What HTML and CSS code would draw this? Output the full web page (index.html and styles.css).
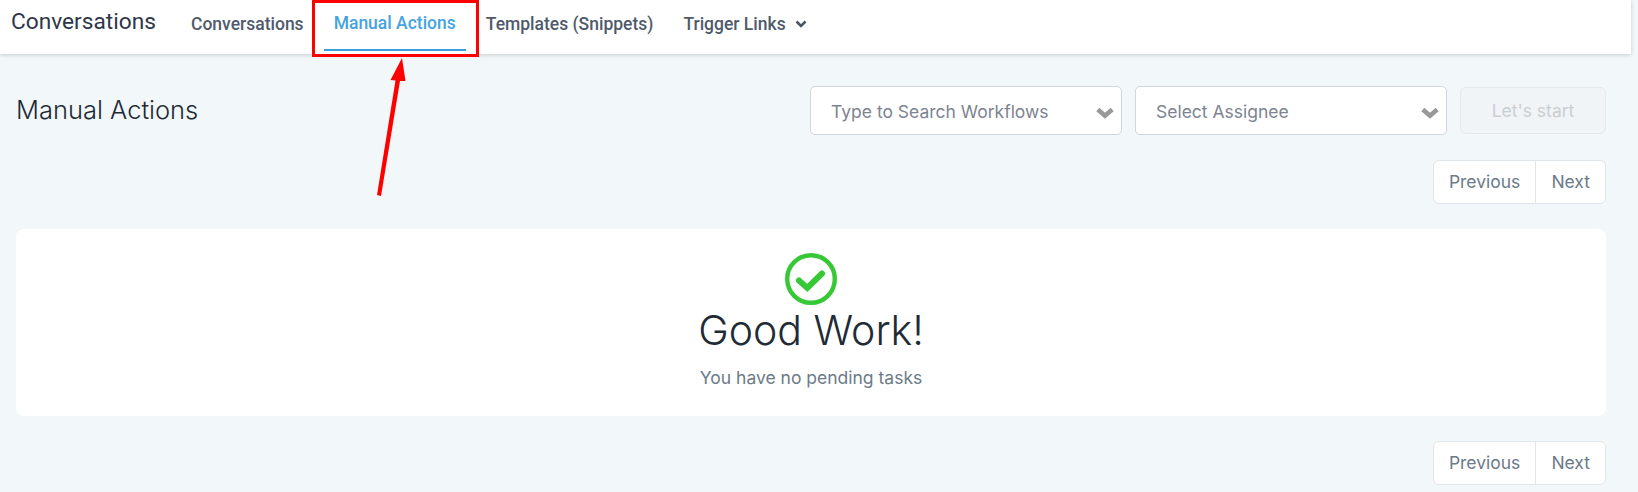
FILE: index.html
```html
<!DOCTYPE html>
<html lang="en">
<head>
<meta charset="utf-8">
<title>Manual Actions</title>
<link rel="stylesheet" href="styles.css">
</head>
<body>
<header class="topbar">
  <div class="brand">Conversations</div>
  <nav class="tabs">
    <a class="tab">Conversations</a>
    <a class="tab active">Manual Actions</a>
    <a class="tab">Templates (Snippets)</a>
    <a class="tab">Trigger Links
      <svg class="tab-caret" viewBox="0 0 12 8" width="12" height="8"><path d="M1.500 1.500 6 6l4.500-4.500" fill="none" stroke="#4b5563" stroke-width="2.600"/></svg>
    </a>
  </nav>
</header>
<main class="content">
  <div class="toolbar">
    <h1 class="page-title">Manual Actions</h1>
    <div class="filters">
      <div class="select"><span>Type to Search Workflows</span>
        <svg class="select-caret" viewBox="0 0 18 12" width="18" height="12"><path d="M1.800 2.400 9 8.700l7.200-6.300" fill="none" stroke="#999" stroke-width="4.600"/></svg>
      </div>
      <div class="select"><span>Select Assignee</span>
        <svg class="select-caret" viewBox="0 0 18 12" width="18" height="12"><path d="M1.800 2.400 9 8.700l7.200-6.300" fill="none" stroke="#999" stroke-width="4.600"/></svg>
      </div>
      <button class="start" disabled>Let's start</button>
    </div>
  </div>
  <div class="pager-row">
    <div class="pager"><span class="page-btn">Previous</span><span class="page-btn">Next</span></div>
  </div>
  <section class="card">
    <svg class="check" viewBox="0 0 52 52" width="52" height="52">
      <circle cx="26" cy="26" r="23.800" fill="none" stroke="#37c837" stroke-width="4.400"/>
      <path d="M14 27.500 22.300 35 37 20.500" fill="none" stroke="#37c837" stroke-width="6" stroke-linecap="round"/>
    </svg>
    <h2 class="card-title">Good Work!</h2>
    <p class="card-text">You have no pending tasks</p>
  </section>
  <div class="pager-row bottom">
    <div class="pager"><span class="page-btn">Previous</span><span class="page-btn">Next</span></div>
  </div>
</main>
<div class="mark-box"></div>
<svg class="mark-arrow" viewBox="0 0 40 140" width="40" height="140">
  <path d="M35 1 23.500 23l5 .5L10 138l4 1L33 24l5.500 0z" fill="#ff0000"/>
</svg>
</body>
</html>
```
FILE: styles.css
```css
* { box-sizing: border-box; }
html, body { height: 100%; }
body {
  margin: 0;
  width: 1638px;
  height: 492px;
  overflow: hidden;
  position: relative;
  background: #f2f7fa;
  font-family: Inter, "Liberation Sans", sans-serif;
}
.topbar {
  width: 1631px;
  height: 54px;
  background: #fff;
  box-shadow: 0 1px 4px rgba(0, 0, 0, .18);
  display: flex;
  padding-left: 11px;
  font-family: Roboto, "Liberation Sans", sans-serif;
}
.brand {
  width: 170px;
  font-size: 22.700px;
  font-weight: 400;
  line-height: 26px;
  padding-top: 9px;
  color: #2d3748;
}
.tabs { display: flex; }
.tab {
  height: 51px;
  padding: 12px 10px 0;
  margin-right: 10px;
  font-size: 17.500px;
  font-weight: 500;
  line-height: 24px;
  color: #4f5a6b;
  display: flex;
  align-items: flex-start;
}
.tab.active {
  color: #45a3de;
  border-bottom: 2px solid #3b9fdc;
  padding-top: 11px;
}
.tab-caret { margin: 8px 0 0 9px; }
.content { width: 1606px; padding-left: 16px; }
.toolbar {
  display: flex;
  justify-content: space-between;
  align-items: flex-start;
  padding-top: 32px;
}
.page-title {
  margin: 0;
  font-size: 25.500px;
  font-weight: 300;
  line-height: 30px;
  padding-top: 9px;
  color: #212b36;
}
.filters { display: flex; gap: 13px; align-items: flex-start; }
.select {
  width: 312px;
  height: 49px;
  background: #fff;
  border: 1px solid #cfd6e0;
  border-radius: 5px;
  display: flex;
  justify-content: space-between;
  align-items: center;
  padding: 1px 7px 0 20px;
  font-size: 17.500px;
  color: #7d8491;
}
.select-caret { margin-top: 3px; }
.start {
  width: 146px;
  height: 47px;
  margin-top: 1px;
  background: #f1f4f6;
  border: 1px solid #e5e9ee;
  border-radius: 6px;
  font: 17.500px Inter, "Liberation Sans", sans-serif;
  color: #c9ced3;
  padding: 0;
}
.pager-row { display: flex; justify-content: flex-end; margin-top: 25px; }
.pager {
  display: flex;
  height: 44px;
  background: #fff;
  border: 1px solid #e1e6ec;
  border-radius: 6px;
}
.page-btn {
  font-size: 17.500px;
  line-height: 42px;
  padding: 0 15px;
  color: #6c7a89;
}
.page-btn + .page-btn { border-left: 1px solid #e1e6ec; }
.card {
  margin-top: 25px;
  height: 187px;
  background: #fff;
  border-radius: 8px;
  display: flex;
  flex-direction: column;
  align-items: center;
  padding-top: 24px;
}
.card-title {
  margin: 0;
  font-size: 41px;
  font-weight: 300;
  line-height: 50px;
  color: #212b36;
}
.card-text {
  margin: 11px 0 0;
  font-size: 17.500px;
  line-height: 24px;
  color: #6c7a89;
}
.pager-row.bottom { margin-top: 25px; }
.mark-box {
  position: absolute;
  left: 312px;
  top: 0;
  width: 167px;
  height: 57px;
  border: 3px solid #ff0000;
}
.mark-arrow {
  position: absolute;
  left: 367px;
  top: 57px;
}
```
